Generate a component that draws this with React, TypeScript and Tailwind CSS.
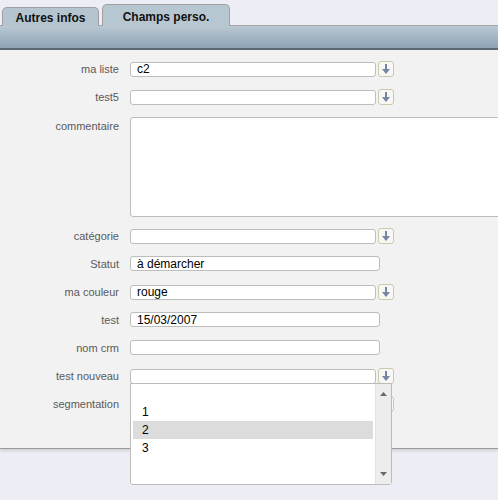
import React from 'react';

type Field = {
  label: string;
  kind: 'select' | 'text' | 'area';
  value?: string;
};

const fields: Field[] = [
  { label: 'ma liste', kind: 'select', value: 'c2' },
  { label: 'test5', kind: 'select' },
  { label: 'commentaire', kind: 'area' },
  { label: 'catégorie', kind: 'select' },
  { label: 'Statut', kind: 'text', value: 'à démarcher' },
  { label: 'ma couleur', kind: 'select', value: 'rouge' },
  { label: 'test', kind: 'text', value: '15/03/2007' },
  { label: 'nom crm', kind: 'text' },
  { label: 'test nouveau', kind: 'select' },
  { label: 'segmentation', kind: 'select' },
];

function ArrowButton() {
  return (
    <div className="ml-[2px] flex h-[16px] w-[16px] shrink-0 items-center justify-center rounded-[3px] border border-[#c9c9ae] bg-[#f7f7f3]">
      <svg width="8" height="11" viewBox="0 0 8 11">
        <rect x="3" y="0" width="2" height="6" fill="#7585a3" />
        <path d="M0 5 L8 5 L4 10 Z" fill="#7585a3" />
      </svg>
    </div>
  );
}

function Row({ field }: { field: Field }) {
  const isArea = field.kind === 'area';
  return (
    <div className={`flex items-start ${isArea ? 'h-[111px]' : 'h-[28px]'}`}>
      <div className={`w-[120px] shrink-0 pr-[1px] text-right text-[11px] leading-[14px] text-[#5a5a5a] ${isArea ? 'pt-[2px]' : 'pt-[1px]'}`}>
        {field.label}
      </div>
      <div className="ml-[10px] flex items-center">
        {isArea ? (
          <div className="h-[100px] w-[380px] rounded-[3px] border border-[#bdbdbd] bg-white" />
        ) : (
          <>
            <div
              className={`flex h-[15px] items-center rounded-[3px] border border-[#bdbdbd] bg-white pl-[6px] text-[12px] text-black ${
                field.kind === 'select' ? 'w-[246px]' : 'w-[250px]'
              }`}
            >
              {field.value}
            </div>
            {field.kind === 'select' && <ArrowButton />}
          </>
        )}
      </div>
    </div>
  );
}

export default function App() {
  return (
    <div
      className="relative h-[500px] w-[498px] overflow-hidden bg-[#ededf5]"
      style={{ fontFamily: '"Liberation Sans", Arial, sans-serif' }}
    >
      {/* tabs */}
      <div className="flex h-[26px] items-end gap-[3px] border-b border-[#a6a6a6] pl-[2px]">
        <div className="mb-[-1px] flex h-[19px] w-[97px] items-center justify-center rounded-t-[5px] border border-b-0 border-[#a0a0a0] bg-[#b5c5cf] pt-[2px] text-[12px] font-bold text-[#111]">
          Autres infos
        </div>
        <div className="mb-[-1px] flex h-[22px] w-[128px] items-start justify-center rounded-t-[5px] border border-b-0 border-[#a0a0a0] bg-[#b7c7d1] pt-[3px] text-[12px] font-bold text-[#111]">
          Champs perso.
        </div>
      </div>
      {/* band */}
      <div className="h-[24px] border-b-2 border-[#5d6973] bg-gradient-to-b from-[#b9c8d2] to-[#8ea3b6]" />

      {/* content */}
      <div className="h-[399px] border-b border-[#9a9a9a] bg-[#f2f2f2] pt-[11px] shadow-[0_2px_3px_rgba(0,0,0,0.12)]">
        {fields.map((f) => (
          <Row key={f.label} field={f} />
        ))}
      </div>

      {/* open dropdown list */}
      <div className="absolute left-[130px] top-[383px] flex h-[102px] w-[262px] rounded-b-[3px] border border-[#bcbcbc] bg-white">
        <div className="flex-1 px-[2px] pt-[1px] text-[12px] text-black">
          <div className="h-[18px]" />
          <div className="flex h-[18px] items-center pl-[9px]">1</div>
          <div className="flex h-[18px] items-center bg-[#dcdcdc] pl-[9px]">2</div>
          <div className="flex h-[18px] items-center pl-[9px]">3</div>
        </div>
        <div className="flex w-[16px] flex-col items-center justify-between border-l border-[#e2e2e2] bg-[#ededed] py-[8px]">
          <svg width="7" height="4" viewBox="0 0 7 4">
            <path d="M0 4 L7 4 L3.5 0 Z" fill="#6a6a6a" />
          </svg>
          <svg width="7" height="4" viewBox="0 0 7 4">
            <path d="M0 0 L7 0 L3.5 4 Z" fill="#6a6a6a" />
          </svg>
        </div>
      </div>
    </div>
  );
}
